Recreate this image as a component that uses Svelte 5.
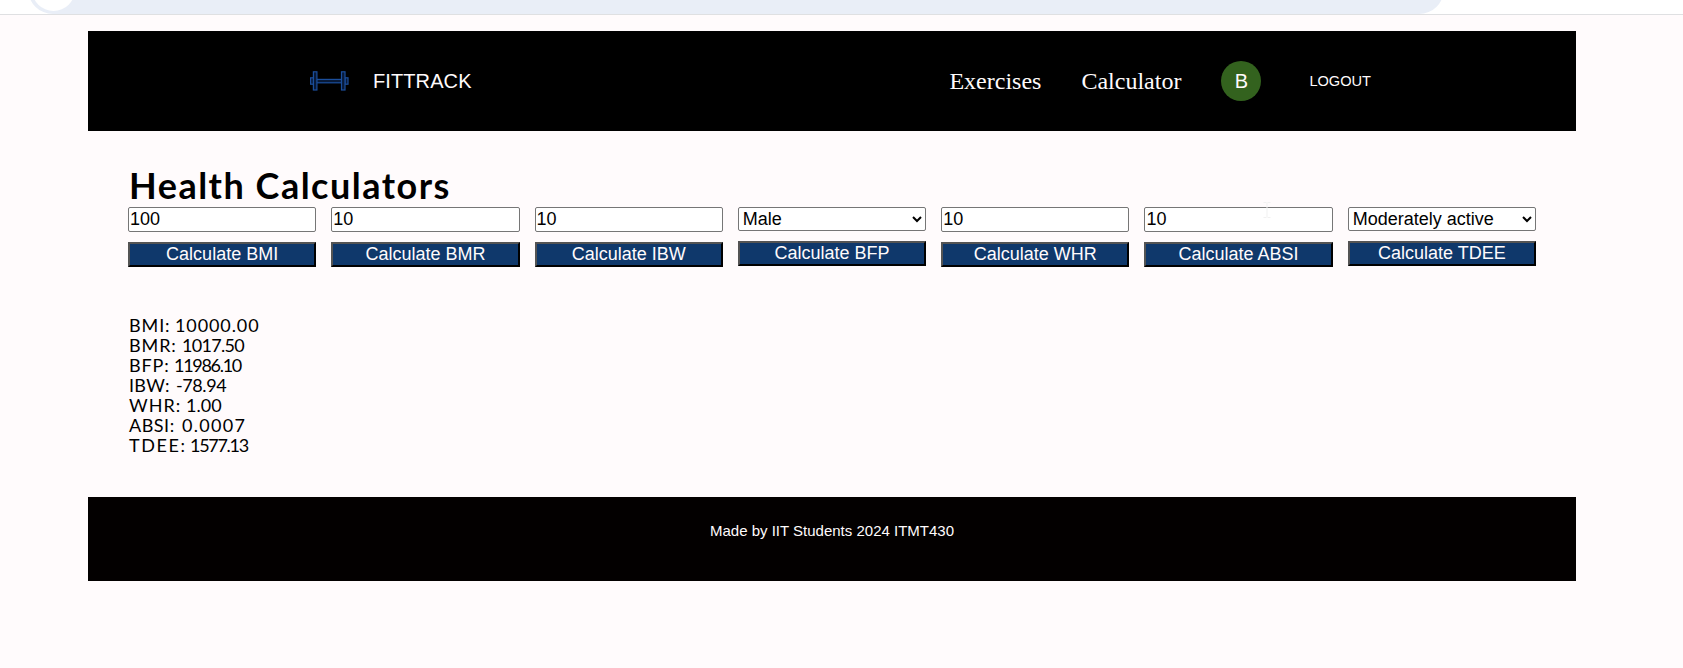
<script>
  const calculators = [
    { name: 'BMI', value: '100' },
    { name: 'BMR', value: '10' },
    { name: 'IBW', value: '10' },
    { name: 'BFP', options: ['Male', 'Female'], value: 'Male' },
    { name: 'WHR', value: '10' },
    { name: 'ABSI', value: '10' },
    { name: 'TDEE', options: ['Sedentary', 'Lightly active', 'Moderately active', 'Very active'], value: 'Moderately active' }
  ];

  // start: width of the label column, track: letter spacing of label and figure
  const results = [
    { label: 'BMI', value: '10000.00', start: 46, track: [0.9, 0.9] },
    { label: 'BMR', value: '1017.50', start: 53, track: [0.9, -0.7] },
    { label: 'BFP', value: '11986.10', start: 45, track: [0.9, -1.3] },
    { label: 'IBW', value: '-78.94', start: 47, track: [0.3, -0.4] },
    { label: 'WHR', value: '1.00', start: 57, track: [1, 0] },
    { label: 'ABSI', value: '0.0007', start: 53, track: [0.5, 1.3] },
    { label: 'TDEE', value: '1577.13', start: 61, track: [1.6, -1.3] }
  ];
</script>

<div class="page">
  <div class="browser">
    <div class="pill"><div class="site"></div></div>
  </div>

  <div class="container">
    <header>
      <div class="brand">
        <svg width="40" height="20" viewBox="0 0 40 20" fill="#081a38" stroke="#1b4e9b" stroke-width="1.2">
          <rect x="1.6" y="6.8" width="3" height="6.4" />
          <rect x="36" y="6.8" width="3" height="6.4" />
          <rect x="7.5" y="8.4" width="25" height="3.4" />
          <rect x="4.4" y="0.8" width="3.5" height="18.2" />
          <rect x="32.5" y="0.8" width="3.5" height="18.2" />
        </svg>
        <span class="name">FITTRACK</span>
      </div>
      <nav>
        <a href="#exercises">Exercises</a>
        <a href="#calculator">Calculator</a>
        <span class="avatar">B</span>
        <button class="logout">LOGOUT</button>
      </nav>
    </header>

    <main>
      <h1>Health Calculators</h1>
      <div class="grid">
        {#each calculators as c}
          <div class="cell">
            {#if c.options}
              <select value={c.value}>
                {#each c.options as o}
                  <option value={o}>{o}</option>
                {/each}
              </select>
            {:else}
              <input value={c.value} />
            {/if}
            <button class="calc">Calculate {c.name}</button>
          </div>
        {/each}
        <svg class="caret" width="8" height="16" viewBox="0 0 8 16" fill="none" stroke="#f1f1f1">
          <path d="M0.5 0.5H3.5M4.5 0.5H7.5M4 1V15M0.5 15.5H3.5M4.5 15.5H7.5" />
        </svg>
      </div>
      <div class="results">
        {#each results as r}
          <p>
            <span class="label" style="width: {r.start}px; letter-spacing: {r.track[0]}px">{r.label}:</span><span style="letter-spacing: {r.track[1]}px">{r.value}</span>
          </p>
        {/each}
      </div>
    </main>

    <footer>Made by IIT Students 2024 ITMT430</footer>
  </div>
</div>

<style>
  :global(body) {
    margin: 0;
    background: #fffbfc;
  }
  .page {
    height: 668px;
    overflow: hidden;
    font-family: "Liberation Sans", Arial, sans-serif;
    color: #000;
  }
  .browser {
    box-sizing: border-box;
    height: 15px;
    overflow: hidden;
    display: flex;
    align-items: flex-start;
    padding-left: 28px;
    background: #fff;
    border-bottom: 1px solid #dfe0e2;
  }
  .pill {
    box-sizing: border-box;
    width: 1416px;
    height: 50px;
    flex: none;
    margin-top: -36px;
    padding: 4px 0 0 4px;
    border-radius: 25px;
    background: #e9eef7;
  }
  .site {
    width: 43px;
    height: 43px;
    border-radius: 50%;
    background: #fff;
  }
  .container {
    width: 1488px;
    margin: 16px 0 0 88px;
  }
  header {
    box-sizing: border-box;
    height: 100px;
    padding: 0 205px 0 221px;
    display: flex;
    align-items: center;
    justify-content: space-between;
    background: #000;
    color: #fffbfc;
  }
  .brand {
    display: flex;
    align-items: center;
    gap: 24px;
  }
  .name {
    font-size: 20px;
    letter-spacing: 0.1px;
  }
  nav {
    display: flex;
    align-items: center;
  }
  nav a {
    margin-right: 40px;
    font: 24px "Liberation Serif", "Times New Roman", serif;
    color: inherit;
    text-decoration: none;
  }
  .avatar {
    width: 40px;
    height: 40px;
    display: grid;
    place-items: center;
    border-radius: 50%;
    background: #33621e;
    font-size: 20px;
  }
  .logout {
    margin-left: 48px;
    padding: 0;
    border: 0;
    background: none;
    color: inherit;
    font: 14.6px "Liberation Sans", Arial, sans-serif;
  }
  main {
    box-sizing: border-box;
    height: 366px;
    padding: 36px 40px 0;
  }
  h1 {
    height: 40px;
    margin: 0 0 0 1px;
    font: 700 36px/37px Lato, sans-serif;
    letter-spacing: 1.5px;
    white-space: nowrap;
  }
  .grid {
    position: relative;
    display: grid;
    grid-template-columns: repeat(7, minmax(0, 1fr));
    gap: 15px;
    height: 60px;
  }
  .cell {
    display: flex;
    flex-direction: column;
    gap: 10px;
  }
  input,
  select,
  .calc {
    box-sizing: border-box;
    width: 100%;
    height: 25px;
    margin: 0;
    font: 18px/20px "Liberation Sans", Arial, sans-serif;
  }
  input,
  select {
    border: 1px solid #767676;
    border-radius: 2px;
    background: #fff;
    color: #000;
  }
  input {
    padding: 0 1px 1px;
  }
  select {
    height: 24px;
    padding: 0;
  }
  .calc {
    padding: 0 0 2px;
    border: 2px outset #000;
    background: #0f386b;
    color: #fffbfc;
  }
  .caret {
    position: absolute;
    left: 1135px;
    top: -5px;
  }
  .results {
    padding: 48px 0 0 1px;
    font: 18px/20px Lato, sans-serif;
  }
  p {
    display: flex;
    height: 20px;
    margin: 0;
    white-space: nowrap;
  }
  .label {
    flex: none;
  }
  footer {
    box-sizing: border-box;
    height: 84px;
    padding-top: 25px;
    background: #030000;
    color: #fffbfc;
    text-align: center;
    font-size: 15px;
    line-height: 17px;
  }
</style>
